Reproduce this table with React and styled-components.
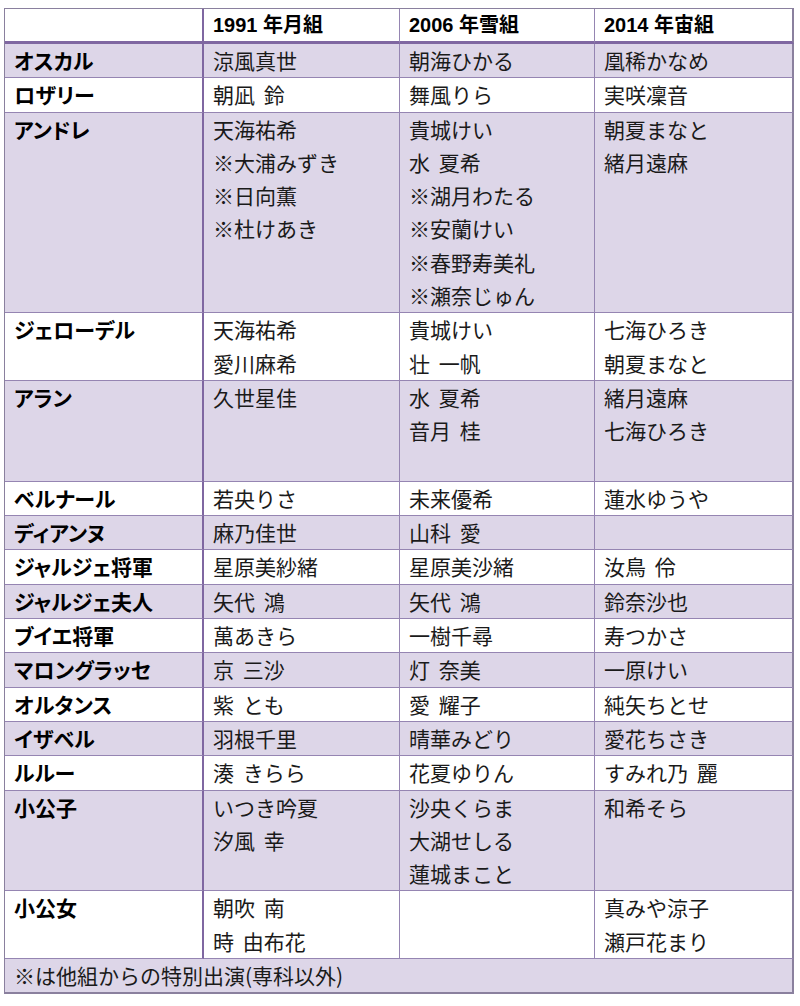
import React from 'react';
import styled, { createGlobalStyle, css } from 'styled-components';

const GlobalStyle = createGlobalStyle`
  html, body {
    margin: 0;
    padding: 0;
    background: #ffffff;
  }
  body {
    padding: 8px 0 0 4px;
    font-family: "Noto Sans CJK JP", sans-serif;
  }
`;

const LINE = 33.3;
const DARK = '#7f67a1';
const THIN = '#9585b2';
const OUTER = '#8a809e';

const CastTable = styled.table`
  border-collapse: separate;
  border-spacing: 0;
  table-layout: fixed;
  width: 789px;
  border-top: 1px solid ${OUTER};
  border-left: 1px solid ${OUTER};
`;

const Col = styled.col`
  width: ${p => p.$width}px;
`;

const Cell = styled.td`
  box-sizing: border-box;
  padding: 0 0 0 9px;
  vertical-align: top;
  text-align: left;
  border-bottom: 1px solid ${THIN};
  border-right: 1px solid ${THIN};
  background: ${p => (p.$shaded ? '#ddd6e8' : '#ffffff')};
  font-size: 21px;
  line-height: ${LINE}px;
  color: #1a1a1a;
  white-space: nowrap;
  overflow: hidden;
  ${p => p.$edge === 'role' && css`border-right: 2px solid ${DARK};`}
  ${p => p.$edge === 'last' && css`border-right: 2px solid ${OUTER};`}
`;

const HeadCell = styled(Cell).attrs({ as: 'th' })`
  height: 35px;
  line-height: 32px;
  border-bottom: 3px solid ${DARK};
  font-family: "Liberation Sans", "Noto Sans CJK JP", sans-serif;
  font-weight: 700;
  font-size: 20px;
  color: #000;
`;

const RoleCell = styled(Cell)`
  font-weight: 700;
  color: #000;
  font-feature-settings: "palt";
`;

const NoteCell = styled(Cell)`
  line-height: 33px;
  border-bottom: 2px solid ${OUTER};
`;

const NameList = styled.div`
  min-height: ${p => p.$lines * LINE}px;
  word-spacing: 4px;
`;

const NameLine = styled.div`
  height: ${LINE}px;
`;

const seasons = ['1991 年月組', '2006 年雪組', '2014 年宙組'];

const roles = [
  { role: 'オスカル', cast: [['涼風真世'], ['朝海ひかる'], ['凰稀かなめ']] },
  { role: 'ロザリー', cast: [['朝凪 鈴'], ['舞風りら'], ['実咲凜音']] },
  {
    role: 'アンドレ',
    cast: [
      ['天海祐希', '※大浦みずき', '※日向薫', '※杜けあき'],
      ['貴城けい', '水 夏希', '※湖月わたる', '※安蘭けい', '※春野寿美礼', '※瀬奈じゅん'],
      ['朝夏まなと', '緒月遠麻'],
    ],
  },
  { role: 'ジェローデル', cast: [['天海祐希', '愛川麻希'], ['貴城けい', '壮 一帆'], ['七海ひろき', '朝夏まなと']] },
  { role: 'アラン', lines: 3, cast: [['久世星佳'], ['水 夏希', '音月 桂'], ['緒月遠麻', '七海ひろき']] },
  { role: 'ベルナール', cast: [['若央りさ'], ['未来優希'], ['蓮水ゆうや']] },
  { role: 'ディアンヌ', cast: [['麻乃佳世'], ['山科 愛'], []] },
  { role: 'ジャルジェ将軍', cast: [['星原美紗緒'], ['星原美沙緒'], ['汝鳥 伶']] },
  { role: 'ジャルジェ夫人', cast: [['矢代 鴻'], ['矢代 鴻'], ['鈴奈沙也']] },
  { role: 'ブイエ将軍', cast: [['萬あきら'], ['一樹千尋'], ['寿つかさ']] },
  { role: 'マロングラッセ', cast: [['京 三沙'], ['灯 奈美'], ['一原けい']] },
  { role: 'オルタンス', cast: [['紫 とも'], ['愛 耀子'], ['純矢ちとせ']] },
  { role: 'イザベル', cast: [['羽根千里'], ['晴華みどり'], ['愛花ちさき']] },
  { role: 'ルルー', cast: [['湊 きらら'], ['花夏ゆりん'], ['すみれ乃 麗']] },
  { role: '小公子', cast: [['いつき吟夏', '汐風 幸'], ['沙央くらま', '大湖せしる', '蓮城まこと'], ['和希そら']] },
  { role: '小公女', cast: [['朝吹 南', '時 由布花'], [], ['真みや涼子', '瀬戸花まり']] },
];

const Names = ({ names, lines }) => (
  <NameList $lines={lines}>
    {names.map((n, i) => (
      <NameLine key={i}>{n}</NameLine>
    ))}
  </NameList>
);

const App = () => (
  <>
    <GlobalStyle />
    <CastTable>
      <colgroup>
        <Col $width={199} />
        <Col $width={196} />
        <Col $width={195} />
        <Col $width={199} />
      </colgroup>
      <thead>
        <tr>
          <HeadCell $edge="role" />
          {seasons.map((s, i) => (
            <HeadCell key={s} $edge={i === seasons.length - 1 ? 'last' : undefined}>
              {s}
            </HeadCell>
          ))}
        </tr>
      </thead>
      <tbody>
        {roles.map((r, idx) => {
          const shaded = idx % 2 === 0;
          const lines = r.lines || Math.max(1, ...r.cast.map(c => c.length));
          return (
            <tr key={r.role}>
              <RoleCell $shaded={shaded} $edge="role">
                <NameList $lines={lines}>{r.role}</NameList>
              </RoleCell>
              {r.cast.map((names, i) => (
                <Cell key={i} $shaded={shaded} $edge={i === r.cast.length - 1 ? 'last' : undefined}>
                  <Names names={names} lines={lines} />
                </Cell>
              ))}
            </tr>
          );
        })}
        <tr>
          <NoteCell $shaded $edge="last" colSpan={4}>
            ※は他組からの特別出演(専科以外)
          </NoteCell>
        </tr>
      </tbody>
    </CastTable>
  </>
);

export default App;
